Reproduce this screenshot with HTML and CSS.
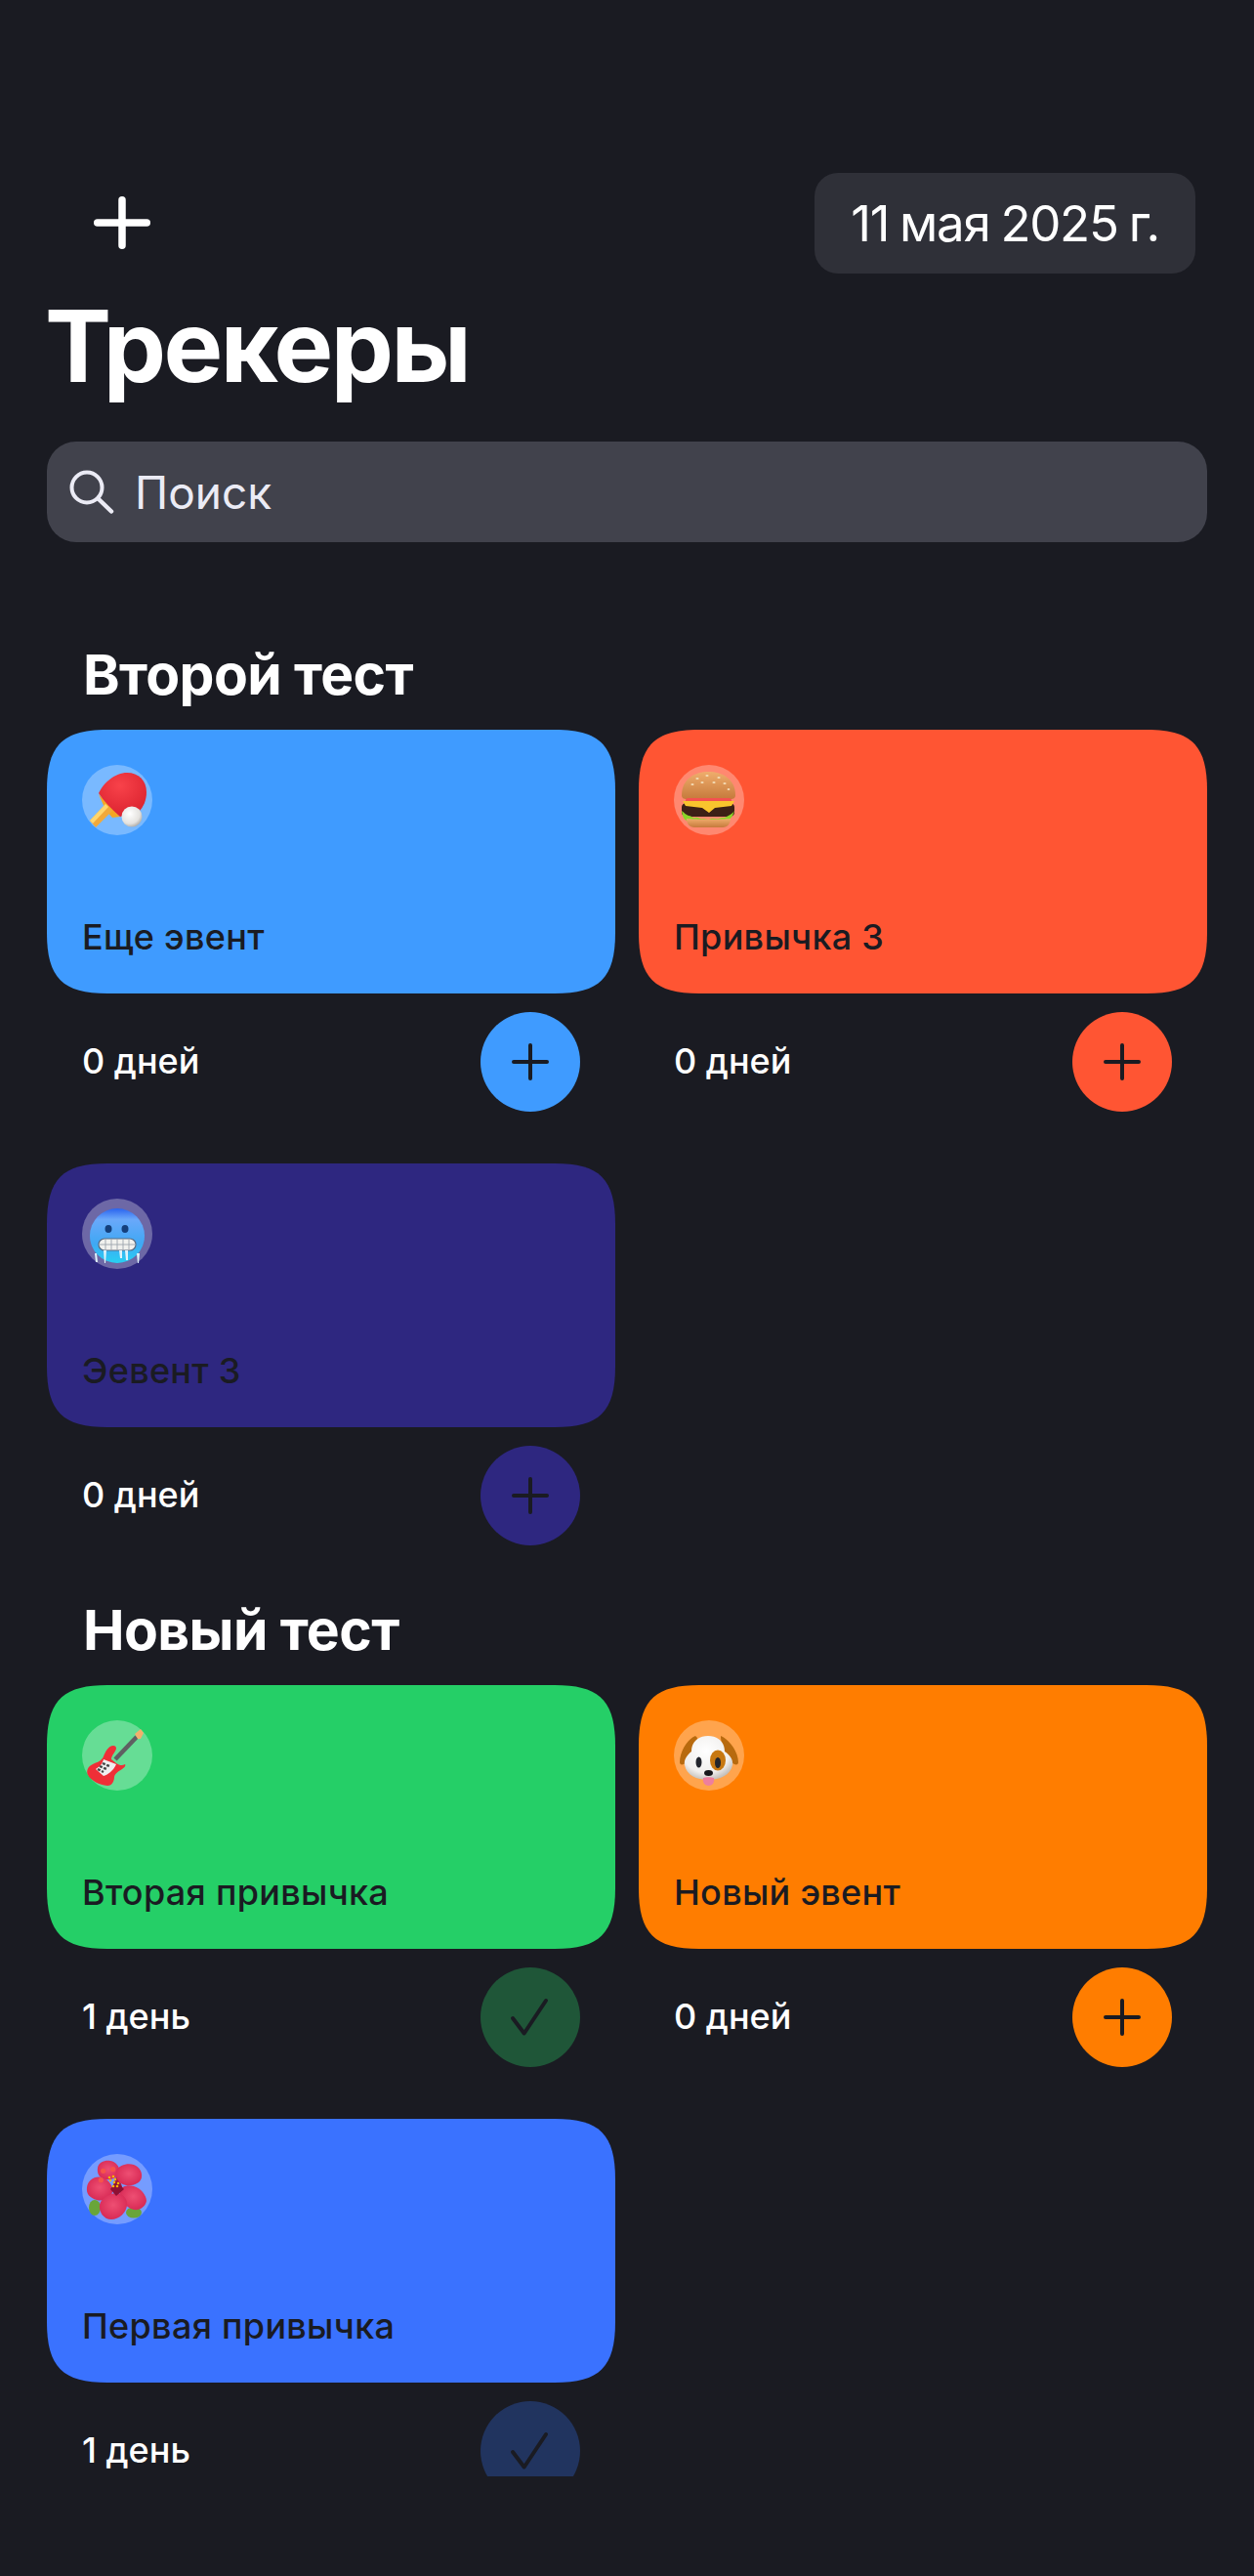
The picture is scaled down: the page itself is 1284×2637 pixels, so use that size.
FILE: index.html
```html
<!DOCTYPE html>
<html lang="ru">
<head>
<meta charset="utf-8">
<title>Трекеры</title>
<link rel="stylesheet" href="styles.css">
</head>
<body>
<svg class="defs" width="0" height="0" aria-hidden="true">
  <defs>
    <symbol id="i-add" viewBox="0 0 58 54"><path d="M29 3.750v46.500M3.750 27h50.500" fill="none" stroke="currentColor" stroke-width="7.500" stroke-linecap="round"/></symbol>
    <symbol id="i-plus" viewBox="0 0 42 42"><path d="M21 4v34M4 21h34" fill="none" stroke="currentColor" stroke-width="4" stroke-linecap="round"/></symbol>
    <symbol id="i-check" viewBox="0 0 42 42"><path d="M3 22 14.700 37.500 37 4" fill="none" stroke="currentColor" stroke-width="4" stroke-linecap="round" stroke-linejoin="round"/></symbol>
    <radialGradient id="g-bat" cx=".45" cy=".3" r=".8"><stop offset="0" stop-color="#f8424a"/><stop offset="1" stop-color="#d81f2c"/></radialGradient>
    <radialGradient id="g-ball" cx=".4" cy=".35" r=".7"><stop offset="0" stop-color="#fff"/><stop offset=".7" stop-color="#e4e2df"/><stop offset="1" stop-color="#a9a6a2"/></radialGradient>
    <linearGradient id="g-bun" x1="0" y1="0" x2="0" y2="1"><stop offset="0" stop-color="#efad6c"/><stop offset="1" stop-color="#c67a3c"/></linearGradient>
    <linearGradient id="g-face" x1="0" y1="0" x2="0" y2="1"><stop offset="0" stop-color="#2a63ee"/><stop offset=".2" stop-color="#6aa8fa"/><stop offset=".65" stop-color="#3fa8f4"/><stop offset="1" stop-color="#27d0f2"/></linearGradient>
    <radialGradient id="g-dog" cx=".45" cy=".35" r=".7"><stop offset="0" stop-color="#fff"/><stop offset=".7" stop-color="#f1efed"/><stop offset="1" stop-color="#b9b5b0"/></radialGradient>
    <radialGradient id="g-pet" cx=".5" cy=".45" r=".7"><stop offset="0" stop-color="#ee4f73"/><stop offset=".8" stop-color="#d82a55"/><stop offset="1" stop-color="#a81b3f"/></radialGradient>
  </defs>
</svg>
<main class="screen">
  <header class="topbar">
    <button class="add-tracker" aria-label="Добавить"><svg class="icon-top"><use href="#i-add"/></svg></button>
    <div class="date-pill">11 мая 2025 г.</div>
  </header>
  <h1 class="title">Трекеры</h1>
  <div class="search">
    <svg class="search-icon" viewBox="0 0 48 48"><circle cx="18" cy="19" r="15.500" fill="none" stroke="currentColor" stroke-width="4"/><path d="M29.500 30.500 43 43.500" fill="none" stroke="currentColor" stroke-width="4.500" stroke-linecap="round"/></svg>
    <span class="search-text">Поиск</span>
  </div>

  <section class="group group-first">
    <h2 class="group-title">Второй тест</h2>
    <div class="grid">
      <article class="tracker">
        <div class="card c-sky">
          <div class="emoji-wrap"><svg class="emoji" viewBox="0 0 72 72">
            <path d="M17 30 39 53 31 54 24 46z" fill="#f5a623"/>
            <path d="M8 57 24 40 31 47 14 64z" fill="#f2a93a"/><path d="M8 57 24 40 27 43 11 60z" fill="#ffd66e"/>
            <path d="M17 29C22 18 34 8 46 8 58 8 66 16 66 28 66 36 63 43 58 48L39 53C30 45 22 37 17 29z" fill="url(#g-bat)"/>
            <circle cx="51" cy="53" r="10.500" fill="url(#g-ball)"/>
          </svg></div>
          <p class="card-name">Еще эвент</p>
        </div>
        <div class="stat"><span class="days">0 дней</span><button class="act a-sky"><svg class="icon-act"><use href="#i-plus"/></svg></button></div>
      </article>
      <article class="tracker">
        <div class="card c-red">
          <div class="emoji-wrap"><svg class="emoji" viewBox="0 0 72 72">
            <path d="M8 31C8 14 22 7 35.500 7S63 14 63 31c0 3-2 4-5 4H13c-3 0-5-1-5-4z" fill="url(#g-bun)"/>
            <g fill="#f3dcb6"><ellipse cx="24" cy="14" rx="1.600" ry="1"/><ellipse cx="34" cy="11" rx="1.600" ry="1"/><ellipse cx="46" cy="13" rx="1.600" ry="1"/><ellipse cx="19" cy="20" rx="1.600" ry="1"/><ellipse cx="29" cy="18" rx="1.600" ry="1"/><ellipse cx="41" cy="18" rx="1.600" ry="1"/><ellipse cx="52" cy="19" rx="1.600" ry="1"/><ellipse cx="56" cy="25" rx="1.400" ry=".9"/></g>
            <rect x="12" y="34" width="47" height="5" rx="2.500" fill="#f4504f"/>
            <path d="M8 43c0-2 2-4 5-4h44c3 0 5 2 5 4v6c0 2-2 4-5 4H13c-3 0-5-2-5-4z" fill="#3c2016"/>
            <path d="M9 37h53l-3 5-17 2-6 5-7-5-17-2z" fill="#f9c42d"/>
            <path d="M8 47c3 2 4 4 7 5 3 0 4 3 7 2 3-1 5 2 8 1 3 0 5 2 8 0 3-1 5 1 8 0 3-2 5 0 8-2 3-2 6-3 8-6l-2 5c-2 4-5 5-9 6H17c-6 0-8-4-9-11z" fill="#8bd528"/>
            <path d="M13 55c8 1 37 1 45 0 0 5-3 9-8 9H21c-5 0-8-4-8-9z" fill="url(#g-bun)"/>
          </svg></div>
          <p class="card-name">Привычка 3</p>
        </div>
        <div class="stat"><span class="days">0 дней</span><button class="act a-red"><svg class="icon-act"><use href="#i-plus"/></svg></button></div>
      </article>
      <article class="tracker">
        <div class="card c-navy">
          <div class="emoji-wrap"><svg class="emoji" viewBox="0 0 72 72">
            <circle cx="36" cy="38" r="28" fill="url(#g-face)"/>
            <ellipse cx="27" cy="31" rx="3.500" ry="4" fill="#143f7c"/><ellipse cx="44" cy="31" rx="3.500" ry="4" fill="#143f7c"/>
            <rect x="17" y="41" width="38" height="12" rx="6" fill="#f1f1ee" stroke="#5b6b80" stroke-width="1.200"/>
            <path d="M17 47h38M24 41v12M30 41v12M36 41v12M42 41v12M48 41v12" stroke="#9da5ad" stroke-width=".9"/>
            <path d="M13 56h2l1 9h-2zM22 53h3l-1 13h-1zM38 53h3l0 8h-2zM44 53h3l0 10h-2zM56 56h3l-1 10h-1z" fill="#dff3fb"/>
          </svg></div>
          <p class="card-name">Эевент 3</p>
        </div>
        <div class="stat"><span class="days">0 дней</span><button class="act a-navy"><svg class="icon-act"><use href="#i-plus"/></svg></button></div>
      </article>
    </div>
  </section>

  <section class="group">
    <h2 class="group-title">Новый тест</h2>
    <div class="grid">
      <article class="tracker">
        <div class="card c-green">
          <div class="emoji-wrap"><svg class="emoji" viewBox="0 0 72 72">
            <path d="M56 17 34 40" stroke="#5f5f62" stroke-width="4.500" fill="none"/>
            <path d="M54 14 60 9 63 13 60 19 57 19z" fill="#f2b06c"/>
            <path d="M32 26C27 26 24 32 22 37 20 42 15 43 11 45 6 47 4 52 6 56 9 62 18 66 26 67 31 67 33 62 33 58 34 54 38 52 41 50 44 48 45 46 44 45 41 47 38 46 35 44L30 40C30 36 34 33 35 29 35 27 34 26 32 26z" fill="#ef2f37"/>
            <path d="M22 40 35 45C32 52 26 56 22 57L14 50C19 47 21 44 22 40z" fill="#f0f0f0"/>
            <path d="M21 44 28 47M18 47 25 50M16 50 22 53" stroke="#444" stroke-width="2.400" stroke-dasharray="3 1.500"/>
          </svg></div>
          <p class="card-name">Вторая привычка</p>
        </div>
        <div class="stat"><span class="days">1 день</span><button class="act a-green-done"><svg class="icon-done"><use href="#i-check"/></svg></button></div>
      </article>
      <article class="tracker">
        <div class="card c-orange">
          <div class="emoji-wrap"><svg class="emoji" viewBox="0 0 72 72">
            <path d="M22 16C14 19 6 32 6 43c0 3 3 3 6 1 5-5 11-14 12-26zM48 16c8 3 18 16 18 27 0 3-3 3-6 1-5-5-11-14-12-26z" fill="#b86a0e"/>
            <path d="M35 16c10 0 17 6 17 16 6 4 9 9 8 14-2 10-13 15-25 15S13 56 11 46c-1-5 2-10 7-14 0-10 7-16 17-16z" fill="url(#g-dog)"/>
            <ellipse cx="45" cy="41" rx="8" ry="10.500" fill="#c77811"/>
            <ellipse cx="25.500" cy="43" rx="3" ry="5.500" fill="#23252c"/><ellipse cx="45" cy="43.500" rx="3" ry="5.500" fill="#23252c"/>
            <ellipse cx="35.500" cy="54" rx="4.500" ry="3" fill="#17171a"/>
            <path d="M30 59c3-1 8-1 11 0 1 5-2 8-5.500 8S29 64 30 59z" fill="#ee7f9d"/>
          </svg></div>
          <p class="card-name">Новый эвент</p>
        </div>
        <div class="stat"><span class="days">0 дней</span><button class="act a-orange"><svg class="icon-act"><use href="#i-plus"/></svg></button></div>
      </article>
      <article class="tracker">
        <div class="card c-blue">
          <div class="emoji-wrap"><svg class="emoji" viewBox="0 0 72 72">
            <ellipse cx="13" cy="55" rx="6" ry="8" fill="#69a53a"/><ellipse cx="53" cy="60" rx="8" ry="5.500" fill="#69a53a"/>
            <path d="M36 20 30 38 42 36z" fill="#a81b3f"/>
            <path d="M16 14C17 8 24 6 29 7 35 8 39 13 38 19 37 24 30 27 24 26 18 25 15 20 16 14z" fill="url(#g-pet)"/>
            <path d="M35 17C38 11 47 9 53 11 59 13 62 19 61 24 60 30 52 33 45 32 38 31 33 24 35 17z" fill="url(#g-pet)"/>
            <path d="M5 34C6 27 13 22 20 24 27 26 32 32 31 39 30 45 22 49 15 47 8 45 4 41 5 34z" fill="url(#g-pet)"/>
            <path d="M39 38C40 33 47 31 53 33 60 35 66 42 66 48 65 54 59 58 53 57 45 55 37 46 39 38z" fill="url(#g-pet)"/>
            <path d="M18 52C19 46 28 40 36 40 43 41 47 47 46 53 45 60 38 67 30 67 22 67 17 59 18 52z" fill="url(#g-pet)"/>
            <path d="M35 28 29 36 35 43 43 36z" fill="#8e1034"/>
            <g fill="#f5b400"><circle cx="28" cy="24" r="1.300"/><circle cx="32" cy="23" r="1.300"/><circle cx="34" cy="26" r="1.300"/><circle cx="29" cy="27" r="1.300"/><circle cx="33" cy="29" r="1.300"/><circle cx="37" cy="30" r="1.300"/><circle cx="32" cy="33" r="1.300"/><circle cx="36" cy="33" r="1.300"/></g>
            <g fill="#f5544a"><circle cx="21.700" cy="17.300" r="2.600"/><circle cx="31.700" cy="15.700" r="2.600"/><circle cx="19.300" cy="26.700" r="2.600"/></g>
          </svg></div>
          <p class="card-name">Первая привычка</p>
        </div>
        <div class="stat"><span class="days">1 день</span><button class="act a-blue-done"><svg class="icon-done"><use href="#i-check"/></svg></button></div>
      </article>
    </div>
  </section>
</main>
</body>
</html>
```
FILE: styles.css
```css
* { box-sizing: border-box; }
html, body { margin: 0; padding: 0; }
body {
  width: 1284px;
  height: 2637px;
  background: #1a1b22;
  font-family: Inter, "Noto Sans", sans-serif;
  color: #fff;
  overflow: hidden;
}
.defs { position: absolute; }
.screen {
  height: 2535px;
  padding: 177px 48px 0;
  overflow: hidden;
}
.topbar {
  display: flex;
  justify-content: space-between;
  align-items: flex-start;
  height: 103px;
  padding: 0 12px 0 48px;
}
.add-tracker {
  width: 58px;
  height: 102px;
  padding: 0;
  border: 0;
  background: none;
  color: #fff;
  display: flex;
  align-items: center;
  justify-content: center;
}
.icon-top { width: 58px; height: 54px; }
.date-pill {
  width: 390px;
  height: 103px;
  border-radius: 24px;
  background: #2f3038;
  font-size: 51px;
  line-height: 103px;
  letter-spacing: -1.3px;
  word-spacing: -2px;
  text-align: center;
  color: #fff;
}
.title {
  margin: 20px 0 0 -2px;
  font-size: 102px;
  line-height: 108px;
  letter-spacing: -2.5px;
  font-weight: 700;
}
.search {
  margin-top: 44px;
  height: 103px;
  border-radius: 30px;
  background: #41424c;
  display: flex;
  align-items: center;
  padding: 0 23px;
  gap: 19px;
  color: #ebebf5;
}
.search-icon { width: 48px; height: 48px; flex: none; }
.search-text { font-size: 46px; }
.group-first { margin-top: 102px; }
.group-title {
  margin: 0;
  padding: 0 37px;
  font-size: 57px;
  line-height: 68px;
  height: 90px;
  letter-spacing: -0.6px;
  font-weight: 700;
}
.grid {
  display: grid;
  grid-template-columns: 582px 582px;
  column-gap: 24px;
}
.tracker { height: 444px; }
.card {
  height: 270px;
  padding: 36px 36px 37px;
  display: flex;
  flex-direction: column;
  justify-content: space-between;
  clip-path: path("M62 0H520C566 0 582 16 582 62V208C582 254 566 270 520 270H62C16 270 0 254 0 208V62C0 16 16 0 62 0Z");
}
.c-sky { background: #3f9bff; }
.c-red { background: #ff5533; }
.c-navy { background: #2e2780; }
.c-green { background: #25cf67; }
.c-orange { background: #ff7d00; }
.c-blue { background: #3a72ff; }
.emoji-wrap {
  width: 72px;
  height: 72px;
  border-radius: 50%;
  background: rgba(255, 255, 255, 0.3);
}
.emoji { display: block; width: 72px; height: 72px; }
.card-name {
  margin: 0;
  font-size: 36px;
  line-height: 42px;
  letter-spacing: 0.3px;
  font-weight: 500;
  color: #1a1b22;
}
.stat {
  display: flex;
  align-items: center;
  justify-content: space-between;
  height: 102px;
  margin-top: 19px;
  padding: 0 36px;
}
.days { font-size: 36px; font-weight: 500; margin-bottom: 2px; }
.act {
  width: 102px;
  height: 102px;
  padding: 0;
  border: 0;
  border-radius: 50%;
  display: flex;
  align-items: center;
  justify-content: center;
  color: #1a1b22;
}
.icon-act { width: 42px; height: 42px; }
.icon-done { width: 42px; height: 42px; }
.a-sky { background: #3f9bff; }
.a-red { background: #ff5533; }
.a-navy { background: #2e2780; }
.a-orange { background: #ff7d00; }
.a-green-done { background: #1f5638; }
.a-blue-done { background: #21345f; }
```
